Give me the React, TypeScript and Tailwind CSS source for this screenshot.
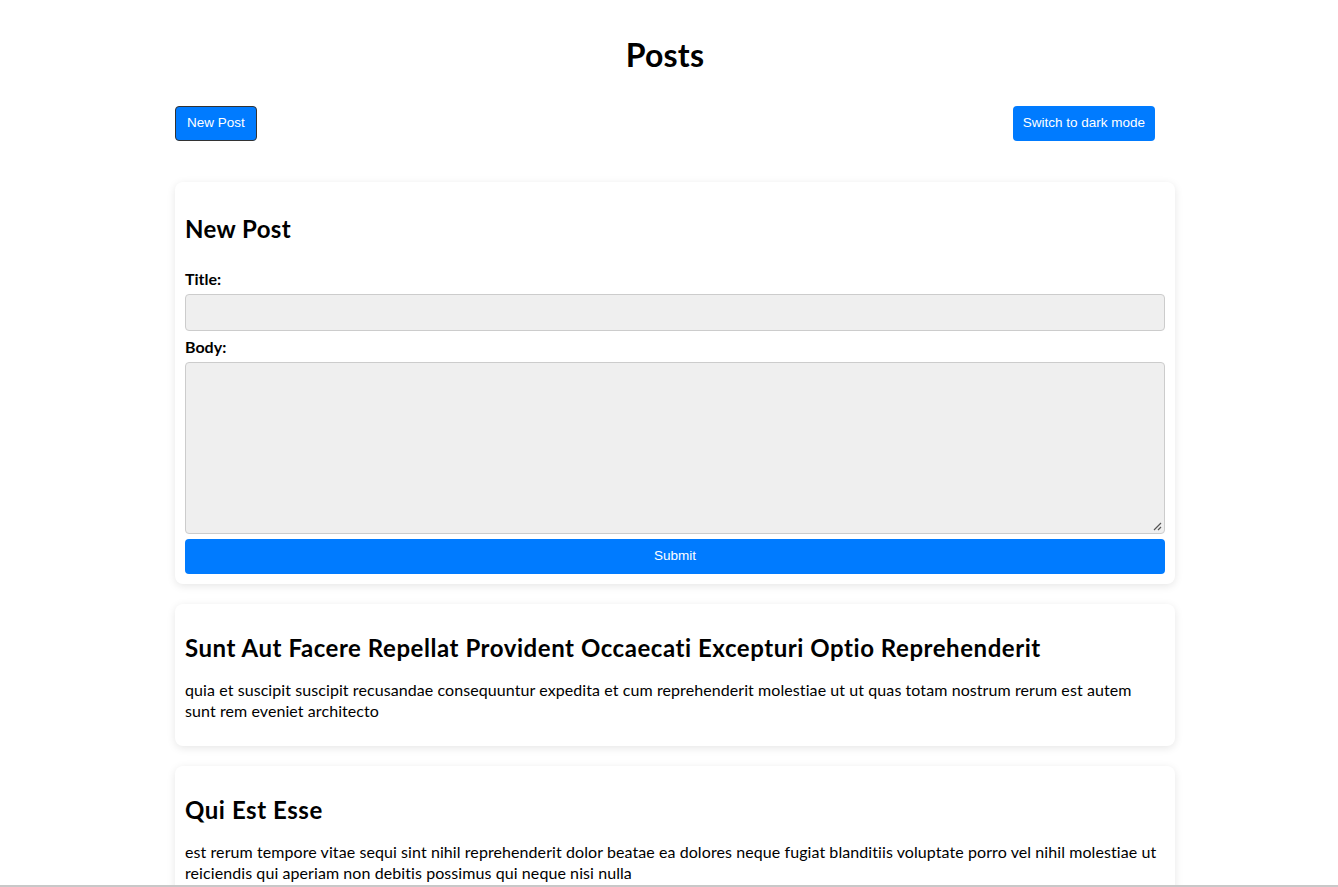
import React from "react";

const posts = [
  {
    title: "Sunt Aut Facere Repellat Provident Occaecati Excepturi Optio Reprehenderit",
    lines: [
      "quia et suscipit suscipit recusandae consequuntur expedita et cum reprehenderit molestiae ut ut quas totam nostrum rerum est autem",
      "sunt rem eveniet architecto",
    ],
  },
  {
    title: "Qui Est Esse",
    lines: [
      "est rerum tempore vitae sequi sint nihil reprehenderit dolor beatae ea dolores neque fugiat blanditiis voluptate porro vel nihil molestiae ut",
      "reiciendis qui aperiam non debitis possimus qui neque nisi nulla",
    ],
  },
  {
    title: "Ea Molestias Quasi Exercitationem Repellat Qui Ipsa Sit Aut",
    lines: [
      "et iusto sed quo iure voluptatem occaecati omnis eligendi aut ad voluptatem doloribus vel accusantium quis pariatur molestiae porro eius odio et",
      "labore et velit aut",
    ],
  },
];

export default function App() {
  return (
    <div className="min-h-screen bg-white text-black font-['Lato','Noto_Sans',sans-serif]">
      <div className="w-[1000px] ml-[175px] pt-[33px]">
        <div className="w-[980px]">
          <h1 className="text-[32px] font-bold leading-[43px] text-center mb-[30px] tracking-[0.2px]">Posts</h1>
          <div className="flex justify-between items-center">
            <button className="h-[35px] px-[11px] bg-[#007bff] text-white text-[13.5px] font-['Liberation_Sans',Arial,sans-serif] rounded-[4px] border border-[#333]">
              New Post
            </button>
            <button className="h-[35px] px-[10px] bg-[#007bff] text-white text-[13.5px] font-['Liberation_Sans',Arial,sans-serif] rounded-[4px]">
              Switch to dark mode
            </button>
          </div>
        </div>

        <div className="mt-[41px] flex flex-col gap-[20px]">
          <div className="rounded-[8px] shadow-[0_2px_8px_rgba(0,0,0,0.1)] p-[10px] bg-white">
            <h2 className="text-[24px] font-bold leading-[32px] mt-[21px] mb-[23px] tracking-[0.4px]">New Post</h2>
            <label className="block text-[16px] font-bold leading-[21px] mb-[5px]">Title:</label>
            <div className="h-[37px] rounded-[4px] border border-[#ccc] bg-[#efefef] mb-[5px]"></div>
            <label className="block text-[16px] font-bold leading-[21px] mb-[5px]">Body:</label>
            <div className="relative h-[172px] rounded-[4px] border border-[#ccc] bg-[#efefef] mb-[5px]">
              <svg className="absolute right-[2px] bottom-[2px]" width="10" height="10" viewBox="0 0 10 10">
                <path d="M9 2 L2 9 M9 6 L6 9" stroke="#555" strokeWidth="1.2" />
              </svg>
            </div>
            <button className="w-full h-[35px] bg-[#007bff] text-white text-[13.5px] font-['Liberation_Sans',Arial,sans-serif] rounded-[4px]">
              Submit
            </button>
          </div>

          {posts.map((p) => (
            <div key={p.title} className="rounded-[8px] shadow-[0_2px_8px_rgba(0,0,0,0.1)] p-[10px] bg-white">
              <h2 className="text-[24px] font-bold leading-[32px] mt-[18px] mb-[15px] tracking-[0.55px]">{p.title}</h2>
              <p className="text-[16px] leading-[21px] mb-[15px] tracking-[0.08px]">
                {p.lines[0]}
                <br />
                {p.lines[1]}
              </p>
            </div>
          ))}
        </div>
      </div>
      <div className="fixed left-0 right-0 bottom-0 h-[2px] bg-[#c8c8c8]"></div>
    </div>
  );
}
